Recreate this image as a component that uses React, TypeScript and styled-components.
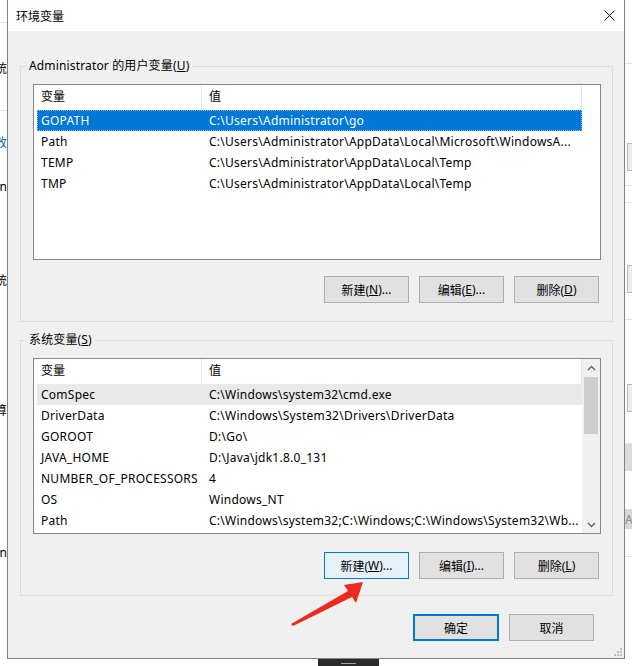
import React from "react";
import styled, { createGlobalStyle, css } from "styled-components";

const FONT = `"Noto Sans", "Noto Sans CJK SC", sans-serif`;

const GlobalStyle = createGlobalStyle`
  html, body { margin: 0; padding: 0; background: #fff; }
  body { font-family: ${FONT}; font-size: 12px; color: #000; overflow: hidden; }
  * { box-sizing: border-box; }
`;

const Desktop = styled.div`
  position: relative;
  width: 632px;
  height: 666px;
  overflow: hidden;
  display: flex;
  align-items: flex-start;
  background: #fff;
`;

const Strip = styled.div<{ $w?: number }>`
  ${(p) => (p.$w ? `width: ${p.$w}px; flex: none;` : "flex: 1;")}
  height: 666px;
  display: flex;
  flex-direction: column;
  overflow: hidden;
`;

const BackRow = styled.div<{ $h: number; $line?: boolean; $color?: string; $end?: boolean; $bg?: string }>`
  flex: none;
  height: ${(p) => p.$h}px;
  display: flex;
  align-items: center;
  justify-content: ${(p) => (p.$end ? "flex-end" : "flex-start")};
  white-space: nowrap;
  overflow: hidden;
  font-size: 12px;
  color: ${(p) => p.$color || "#000"};
  background: ${(p) => p.$bg || "transparent"};
  border-bottom: ${(p) => (p.$line ? "1px solid #e2e2e2" : "none")};
`;

const BackBox = styled.div<{ $h: number }>`
  flex: none;
  height: ${(p) => p.$h}px;
  margin-left: 2px;
  border: 1px solid #b9b9b9;
  border-right: none;
  background: #ececec;
`;

const Dialog = styled.div`
  position: relative;
  flex: none;
  width: 618px;
  margin-top: -1px;
  border: 1px solid #838383;
  background: #f0f0f0;
  display: flex;
  flex-direction: column;
`;

const TitleBar = styled.div`
  height: 31px;
  background: #fff;
  display: flex;
  align-items: center;
  justify-content: space-between;
  padding: 0 9px 0 8px;
`;

const Title = styled.span`
  font-size: 12px;
  color: #000;
`;

const Body = styled.div`
  display: flex;
  flex-direction: column;
  padding: 27px 11px 17px 12px;
`;

const Group = styled.fieldset<{ $mt?: number; $gap: number; $pb: number }>`
  margin: ${(p) => p.$mt || 0}px 0 0 0;
  min-width: 0;
  border: 1px solid #dcdcdc;
  padding: 10px 11px ${(p) => p.$pb}px 12px;
  display: flex;
  flex-direction: column;
  gap: ${(p) => p.$gap}px;
`;

const Legend = styled.legend`
  padding: 0 3px;
  margin-left: -7px;
  line-height: 16px;
  font-size: 12px;
  letter-spacing: 0.15px;
  color: #000;
`;

const ListBox = styled.div`
  height: 176px;
  border: 1px solid #828790;
  background: #fff;
  display: grid;
  grid-template-columns: 1fr 18px;
`;

const ListMain = styled.div`
  display: flex;
  flex-direction: column;
  overflow: hidden;
`;

const Header = styled.div`
  height: 25px;
  display: grid;
  grid-template-columns: 168px 1fr;
`;

const HeadCell = styled.div`
  padding-left: 7px;
  line-height: 24px;
  border-right: 1px solid #e5e5e5;
  font-size: 12px;
`;

const Row = styled.div<{ $state?: "selected" | "hover" }>`
  position: relative;
  height: 21px;
  margin-left: 3px;
  display: grid;
  grid-template-columns: 165px 1fr;
  line-height: 21px;
  font-size: 12px;
  letter-spacing: 0.25px;
  white-space: nowrap;
  color: #000;
  ${(p) =>
    p.$state === "selected" &&
    css`
      background: #0078d7;
      color: #fff;
      &::after {
        content: "";
        position: absolute;
        inset: 0;
        border: 1px dotted rgba(255, 255, 255, 0.55);
      }
    `}
  ${(p) =>
    p.$state === "hover" &&
    css`
      background: #e9e9e9;
    `}
`;

const NameCell = styled.span`
  padding-left: 4px;
  overflow: hidden;
`;

const ValueCell = styled.span`
  padding-left: 7px;
  overflow: hidden;
`;

const EmptyTrack = styled.div`
  background: #fff;
`;

const ScrollBar = styled.div`
  background: #f0f0f0;
  display: flex;
  flex-direction: column;
`;

const ScrollArrow = styled.div`
  height: 17px;
  display: flex;
  align-items: center;
  justify-content: center;
  flex: none;
`;

const ScrollTrackArea = styled.div`
  flex: 1;
  display: flex;
  flex-direction: column;
`;

const Thumb = styled.div`
  height: 57px;
  width: 14px;
  margin: 1px 0 0 2px;
  background: #cdcdcd;
`;

const ButtonRow = styled.div<{ $pr?: number }>`
  display: flex;
  justify-content: flex-end;
  gap: 10px;
  padding-right: ${(p) => p.$pr || 0}px;
`;

const Btn = styled.button<{ $variant?: "hover" | "primary"; $w?: number }>`
  width: ${(p) => p.$w || 85}px;
  height: 27px;
  padding: 0;
  margin: 0;
  font-family: ${FONT};
  font-size: 12px;
  color: #000;
  background: #e1e1e1;
  border: 1px solid #adadad;
  display: flex;
  align-items: center;
  justify-content: center;
  ${(p) =>
    p.$variant === "hover" &&
    css`
      background: #e5f1fb;
      border-color: #0078d7;
    `}
  ${(p) =>
    p.$variant === "primary" &&
    css`
      border: 2px solid #0078d7;
    `}
`;

const Footer = styled(ButtonRow)`
  margin-top: 18px;
`;

const Grip = styled.svg`
  position: absolute;
  right: 2px;
  bottom: 2px;
`;

const Taskbar = styled.div`
  position: absolute;
  left: 318px;
  top: 659px;
  width: 61px;
  height: 7px;
  background: #2b2b2b;
  display: flex;
  justify-content: center;
  padding-top: 4px;
`;

const TaskDash = styled.div`
  width: 15px;
  height: 1px;
  background: #a0a0a0;
`;

const Overlay = styled.svg`
  position: absolute;
  left: 0;
  top: 0;
  pointer-events: none;
`;

type Item = { name: string; value: string; state?: "selected" | "hover" };

const userVars: Item[] = [
  { name: "GOPATH", value: "C:\\Users\\Administrator\\go", state: "selected" },
  { name: "Path", value: "C:\\Users\\Administrator\\AppData\\Local\\Microsoft\\WindowsA..." },
  { name: "TEMP", value: "C:\\Users\\Administrator\\AppData\\Local\\Temp" },
  { name: "TMP", value: "C:\\Users\\Administrator\\AppData\\Local\\Temp" },
];

const sysVars: Item[] = [
  { name: "ComSpec", value: "C:\\Windows\\system32\\cmd.exe", state: "hover" },
  { name: "DriverData", value: "C:\\Windows\\System32\\Drivers\\DriverData" },
  { name: "GOROOT", value: "D:\\Go\\" },
  { name: "JAVA_HOME", value: "D:\\Java\\jdk1.8.0_131" },
  { name: "NUMBER_OF_PROCESSORS", value: "4" },
  { name: "OS", value: "Windows_NT" },
  { name: "Path", value: "C:\\Windows\\system32;C:\\Windows;C:\\Windows\\System32\\Wb..." },
];

const Chevron = ({ up }: { up?: boolean }) => (
  <svg width="9" height="6" viewBox="0 0 9 6">
    <polyline
      points={up ? "1,5 4.5,1.5 8,5" : "1,1 4.5,4.5 8,1"}
      fill="none"
      stroke="#606060"
      strokeWidth="1.3"
    />
  </svg>
);

const List = ({ items, scroll }: { items: Item[]; scroll?: boolean }) => (
  <ListBox>
    <ListMain>
      <Header>
        <HeadCell>变量</HeadCell>
        <HeadCell>值</HeadCell>
      </Header>
      {items.map((it) => (
        <Row key={it.name + it.value} $state={it.state}>
          <NameCell>{it.name}</NameCell>
          <ValueCell>{it.value}</ValueCell>
        </Row>
      ))}
    </ListMain>
    {scroll ? (
      <ScrollBar>
        <ScrollArrow>
          <Chevron up />
        </ScrollArrow>
        <ScrollTrackArea>
          <Thumb />
        </ScrollTrackArea>
        <ScrollArrow>
          <Chevron />
        </ScrollArrow>
      </ScrollBar>
    ) : (
      <EmptyTrack />
    )}
  </ListBox>
);

export default function App() {
  return (
    <>
      <GlobalStyle />
      <Desktop>
        <Strip $w={7}>
          <BackRow $h={23} $line />
          <BackRow $h={36} />
          <BackRow $h={18} $end>系统</BackRow>
          <BackRow $h={34} $line />
          <BackRow $h={22} />
          <BackRow $h={18} $end $color="#1a5fb4">更改</BackRow>
          <BackRow $h={26} />
          <BackRow $h={18} $end>Admin</BackRow>
          <BackRow $h={76} />
          <BackRow $h={18} $end>系统</BackRow>
          <BackRow $h={112} />
          <BackRow $h={18} $end>计算</BackRow>
          <BackRow $h={124} />
          <BackRow $h={18} $end>Admin</BackRow>
          <BackRow $h={106} $line />
        </Strip>
        <Dialog>
          <TitleBar>
            <Title>环境变量</Title>
            <svg width="11" height="11" viewBox="0 0 11 11">
              <path d="M0.5 0.5 L10.5 10.5 M10.5 0.5 L0.5 10.5" stroke="#111" strokeWidth="1" fill="none" />
            </svg>
          </TitleBar>
          <Body>
            <Group $gap={16} $pb={18}>
              <Legend>
                Administrator 的用户变量(<u>U</u>)
              </Legend>
              <List items={userVars} />
              <ButtonRow $pr={2}>
                <Btn>
                  新建(<u>N</u>)...
                </Btn>
                <Btn>
                  编辑(<u>E</u>)...
                </Btn>
                <Btn>
                  删除(<u>D</u>)
                </Btn>
              </ButtonRow>
            </Group>
            <Group $mt={10} $gap={18} $pb={16}>
              <Legend>
                系统变量(<u>S</u>)
              </Legend>
              <List items={sysVars} scroll />
              <ButtonRow $pr={2}>
                <Btn $variant="hover">
                  新建(<u>W</u>)...
                </Btn>
                <Btn>
                  编辑(<u>I</u>)...
                </Btn>
                <Btn>
                  删除(<u>L</u>)
                </Btn>
              </ButtonRow>
            </Group>
            <Footer $pr={19}>
              <Btn $variant="primary" $w={86}>
                确定
              </Btn>
              <Btn>取消</Btn>
            </Footer>
          </Body>
          <Grip width="8" height="8" viewBox="0 0 8 8">
            {[
              [6, 0],
              [6, 3],
              [3, 3],
              [6, 6],
              [3, 6],
              [0, 6],
            ].map(([x, y]) => (
              <rect key={`${x}-${y}`} x={x} y={y} width="2" height="2" fill="#bdbdbd" />
            ))}
          </Grip>
        </Dialog>
        <Strip>
          <BackRow $h={64} $line />
          <BackRow $h={79} />
          <BackBox $h={28} />
          <BackRow $h={15} $line />
          <BackRow $h={17} $line />
          <BackRow $h={62} />
          <BackBox $h={28} />
          <BackRow $h={27} $line />
          <BackRow $h={64} />
          <BackBox $h={28} />
          <BackRow $h={32} $line />
          <BackRow $h={27} $bg="#dcdcdc" />
          <BackRow $h={38} />
          <BackRow $h={20} $bg="#d6d6d6" $color="#8a8a8a">
            A
          </BackRow>
          <BackRow $h={28} $line />
        </Strip>
        <Taskbar>
          <TaskDash />
        </Taskbar>
        <Overlay width="632" height="666" viewBox="0 0 632 666">
          <polygon
            points="291,624 348,591 344,585 363,582 356,603 352,597 293,626"
            fill="#ee2a20"
          />
        </Overlay>
      </Desktop>
    </>
  );
}
